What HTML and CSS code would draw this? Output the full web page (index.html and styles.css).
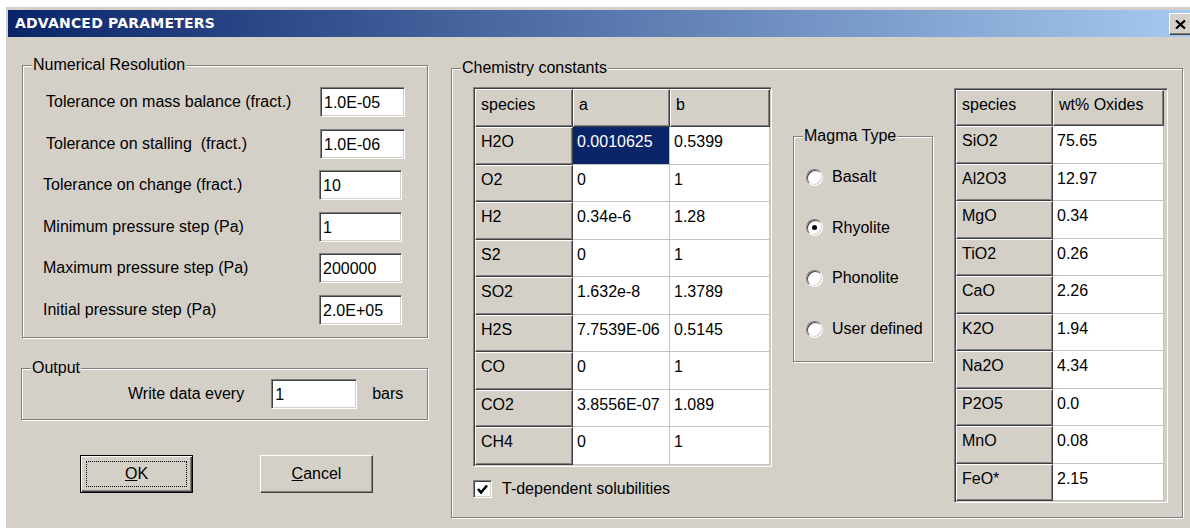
FILE: index.html
```html
<!DOCTYPE html>
<html>
<head>
<meta charset="utf-8">
<title>Advanced Parameters</title>
<link rel="stylesheet" href="styles.css">
</head>
<body>
<div class="window">
  <div class="titlebar">
    <span class="title">ADVANCED PARAMETERS</span>
    <button class="close" type="button" aria-label="Close">
      <svg width="11" height="9" viewBox="0 0 11 9"><path d="M1 0.5 L10 8.5 M10 0.5 L1 8.5" stroke="#000" stroke-width="2.2" fill="none"/></svg>
    </button>
  </div>

  <div class="client">
    <div class="left-col">
      <fieldset class="group numres">
        <legend>Numerical Resolution</legend>
        <div class="rows">
          <div class="row"><span class="lbl">Tolerance on mass balance (fract.)</span><input class="field" type="text" value="1.0E-05"></div>
          <div class="row"><span class="lbl">Tolerance on stalling&nbsp; (fract.)</span><input class="field" type="text" value="1.0E-06"></div>
          <div class="row narrow"><span class="lbl">Tolerance on change (fract.)</span><input class="field" type="text" value="10"></div>
          <div class="row narrow"><span class="lbl">Minimum pressure step (Pa)</span><input class="field" type="text" value="1"></div>
          <div class="row narrow"><span class="lbl">Maximum pressure step (Pa)</span><input class="field" type="text" value="200000"></div>
          <div class="row narrow"><span class="lbl">Initial pressure step (Pa)</span><input class="field" type="text" value="2.0E+05"></div>
        </div>
      </fieldset>

      <fieldset class="group output">
        <legend>Output</legend>
        <div class="output-row">
          <span class="lbl">Write data every</span>
          <input class="field out-field" type="text" value="1">
          <span class="lbl">bars</span>
        </div>
      </fieldset>

      <div class="buttons">
        <button class="btn default" type="button"><span class="focus"><u>O</u>K</span></button>
        <button class="btn" type="button"><span class="focus"><u>C</u>ancel</span></button>
      </div>
    </div>

    <fieldset class="group chem">
      <legend>Chemistry constants</legend>
      <div class="chem-body">
        <div class="chem-col">
          <div class="grid grid-abc">
            <div class="hd">species</div><div class="hd">a</div><div class="hd">b</div>
            <div class="hd">H2O</div><div class="cell sel">0.0010625</div><div class="cell">0.5399</div>
            <div class="hd">O2</div><div class="cell">0</div><div class="cell">1</div>
            <div class="hd">H2</div><div class="cell">0.34e-6</div><div class="cell">1.28</div>
            <div class="hd">S2</div><div class="cell">0</div><div class="cell">1</div>
            <div class="hd">SO2</div><div class="cell">1.632e-8</div><div class="cell">1.3789</div>
            <div class="hd">H2S</div><div class="cell">7.7539E-06</div><div class="cell">0.5145</div>
            <div class="hd">CO</div><div class="cell">0</div><div class="cell">1</div>
            <div class="hd">CO2</div><div class="cell">3.8556E-07</div><div class="cell">1.089</div>
            <div class="hd">CH4</div><div class="cell">0</div><div class="cell">1</div>
          </div>
          <label class="check">
            <span class="box"><svg width="13" height="13" viewBox="0 0 13 13"><path d="M2 6 L5 9.5 L11 2.5" stroke="#000" stroke-width="2.6" fill="none"/></svg></span>
            <span>T-dependent solubilities</span>
          </label>
        </div>

        <fieldset class="group magma">
          <legend>Magma Type</legend>
          <div class="radios">
            <div class="radio"><span class="dot"></span><span>Basalt</span></div>
            <div class="radio on"><span class="dot"></span><span>Rhyolite</span></div>
            <div class="radio"><span class="dot"></span><span>Phonolite</span></div>
            <div class="radio"><span class="dot"></span><span>User defined</span></div>
          </div>
        </fieldset>

        <div class="grid grid-oxides">
          <div class="hd">species</div><div class="hd">wt% Oxides</div>
          <div class="hd">SiO2</div><div class="cell">75.65</div>
          <div class="hd">Al2O3</div><div class="cell">12.97</div>
          <div class="hd">MgO</div><div class="cell">0.34</div>
          <div class="hd">TiO2</div><div class="cell">0.26</div>
          <div class="hd">CaO</div><div class="cell">2.26</div>
          <div class="hd">K2O</div><div class="cell">1.94</div>
          <div class="hd">Na2O</div><div class="cell">4.34</div>
          <div class="hd">P2O5</div><div class="cell">0.0</div>
          <div class="hd">MnO</div><div class="cell">0.08</div>
          <div class="hd">FeO*</div><div class="cell">2.15</div>
        </div>
      </div>
    </fieldset>
  </div>
</div>
</body>
</html>
```

FILE: styles.css
```css
html, body {
  margin: 0;
  padding: 0;
  overflow: hidden;
  background: #ffffff;
}

body {
  font-family: "Liberation Sans", Arial, sans-serif;
  font-size: 16px;
  line-height: 18px;
  color: #000;
}

/* dialog frame */
.window {
  margin: 7px 0 0 6px;
  width: 1190px;
  height: 521px;
  box-sizing: border-box;
  padding: 3px 2px 0 2px;
  background: #d4d0c8;
}

.titlebar {
  height: 27px;
  display: flex;
  align-items: flex-start;
  justify-content: space-between;
  background: linear-gradient(to right, #0a246a 0%, #a6caf0 100%);
}

.title {
  font-family: "DejaVu Sans", Verdana, sans-serif;
  font-weight: bold;
  font-size: 14px;
  letter-spacing: 0.2px;
  line-height: 27px;
  color: #fff;
  padding-left: 7px;
}

.close {
  width: 23px;
  height: 22px;
  margin: 3px 2px 0 0;
  padding: 0 0 0 2px;
  display: flex;
  align-items: center;
  justify-content: flex-start;
  box-sizing: border-box;
  background: #d4d0c8;
  border: 1px solid;
  border-color: #fff #404040 #404040 #fff;
  box-shadow: inset -1px -1px 0 #808080;
}

.close svg { margin-left: 3px; }

/* client area */
.client {
  display: flex;
  align-items: flex-start;
  padding: 19px 0 0 13px;
}

.left-col {
  width: 407px;
  display: flex;
  flex-direction: column;
}

/* etched group boxes */
.group {
  margin: 0;
  padding: 0;
  min-width: 0;
  border: 1px solid #808080;
  box-shadow: inset 1px 1px 0 #fff, 1px 1px 0 #fff;
  box-sizing: border-box;
}

.group > legend {
  margin-left: 9px;
  padding: 0 1px;
  line-height: 18px;
  background: #d4d0c8;
}

.numres {
  width: 406px;
  margin-left: 1px;
  height: 282px;
}

.rows {
  display: flex;
  flex-direction: column;
  gap: 11.5px;
  padding-top: 13px;
}

.row {
  display: flex;
  align-items: center;
  justify-content: space-between;
  padding: 0 22px 0 23px;
}

.row.narrow {
  padding: 0 25px 0 20px;
}

.row.narrow .field { width: 83px; }

/* sunken edit fields */
.field {
  width: 85px;
  height: 30px;
  box-sizing: border-box;
  margin: 0;
  padding: 2px 0 0 3px;
  font-family: "Liberation Sans", Arial, sans-serif;
  font-size: 16px;
  color: #000;
  background: #fff;
  border: 1px solid;
  border-color: #808080 #fff #fff #808080;
  box-shadow: inset 1px 1px 0 #404040, inset -1px -1px 0 #d4d0c8;
  outline: none;
}

.output {
  width: 407px;
  height: 61px;
  margin-top: 21px;
}

.output-row {
  display: flex;
  align-items: center;
  padding: 2px 0 0 106px;
}

.out-field {
  width: 86px;
  margin-left: 27px;
  margin-right: 15px;
}

/* push buttons */
.buttons {
  display: flex;
  gap: 67px;
  padding-left: 59px;
  margin-top: 35px;
}

.btn {
  width: 113px;
  height: 38px;
  box-sizing: border-box;
  padding: 5px;
  display: flex;
  font-family: "Liberation Sans", Arial, sans-serif;
  font-size: 16px;
  color: #000;
  background: #d4d0c8;
  border: 1px solid;
  border-color: #fff #404040 #404040 #fff;
  box-shadow: inset -1px -1px 0 #808080;
}

.btn.default {
  border: 1px solid #000;
  box-shadow: inset 1px 1px 0 #fff, inset -1px -1px 0 #404040, inset -2px -2px 0 #808080;
}

.focus {
  flex: 1;
  display: flex;
  align-items: center;
  justify-content: center;
  border: 1px dotted transparent;
}

.btn.default .focus { border-color: #000; }

/* chemistry group */
.chem {
  width: 732px;
  height: 459px;
  margin: 3px 0 0 23px;
}

.chem-body {
  display: flex;
  align-items: flex-start;
  padding: 10px 0 0 21px;
}

.chem-col {
  display: flex;
  flex-direction: column;
}

/* string grids */
.grid {
  display: grid;
  box-sizing: border-box;
  background: #d4d0c8;
  border: 1px solid;
  border-color: #808080 #fff #fff #808080;
  box-shadow: inset 1px 1px 0 #404040, inset -1px -1px 0 #d4d0c8;
  padding: 1px;
  align-content: start;
}

.grid-abc {
  width: 299px;
  height: 380px;
  grid-template-columns: 98px 97px 100px;
  grid-template-rows: 38px repeat(9, 37.5px);
}

.grid-oxides {
  width: 214px;
  height: 415px;
  margin: 1px 0 0 21px;
  grid-template-columns: 97px 111px;
  grid-template-rows: 36px repeat(10, 37.5px);
}

.hd {
  box-sizing: border-box;
  background: #d4d0c8;
  border: 1px solid;
  border-color: #fff #404040 #404040 #fff;
  box-shadow: inset -1px -1px 0 #808080;
  padding: 5px 0 0 5px;
  white-space: nowrap;
}

.grid-abc > .hd:nth-child(-n+3) { padding-top: 6px; }

.cell {
  box-sizing: border-box;
  background: #fff;
  border-right: 1px solid #c4c4c4;
  border-bottom: 1px solid #c4c4c4;
  padding: 6px 0 0 4px;
  white-space: nowrap;
}

.cell.sel {
  background: #0a246a;
  color: #fff;
}

.check {
  display: flex;
  align-items: center;
  gap: 10px;
  margin-top: 13px;
}

.box {
  width: 19px;
  height: 18px;
  box-sizing: border-box;
  display: flex;
  align-items: center;
  justify-content: center;
  background: #fff;
  border: 1px solid;
  border-color: #808080 #fff #fff #808080;
  box-shadow: inset 1px 1px 0 #404040, inset -1px -1px 0 #d4d0c8;
}

/* radio group */
.magma {
  width: 140px;
  height: 235px;
  margin: 40px 0 0 21px;
}

.radios {
  display: flex;
  flex-direction: column;
  gap: 32.7px;
  padding: 23px 0 0 12px;
}

.radio {
  display: flex;
  align-items: center;
  gap: 9px;
  height: 18px;
}

.dot {
  width: 17px;
  height: 17px;
  box-sizing: border-box;
  border-radius: 50%;
  background: #fff;
  border: 1px solid;
  border-color: #808080 #fff #fff #808080;
  box-shadow: inset 1px 1px 0 #404040, inset -1px -1px 0 #d4d0c8;
  display: flex;
  align-items: center;
  justify-content: center;
}

.radio.on .dot::after {
  content: "";
  width: 5px;
  height: 5px;
  border-radius: 50%;
  background: #000;
}
```
